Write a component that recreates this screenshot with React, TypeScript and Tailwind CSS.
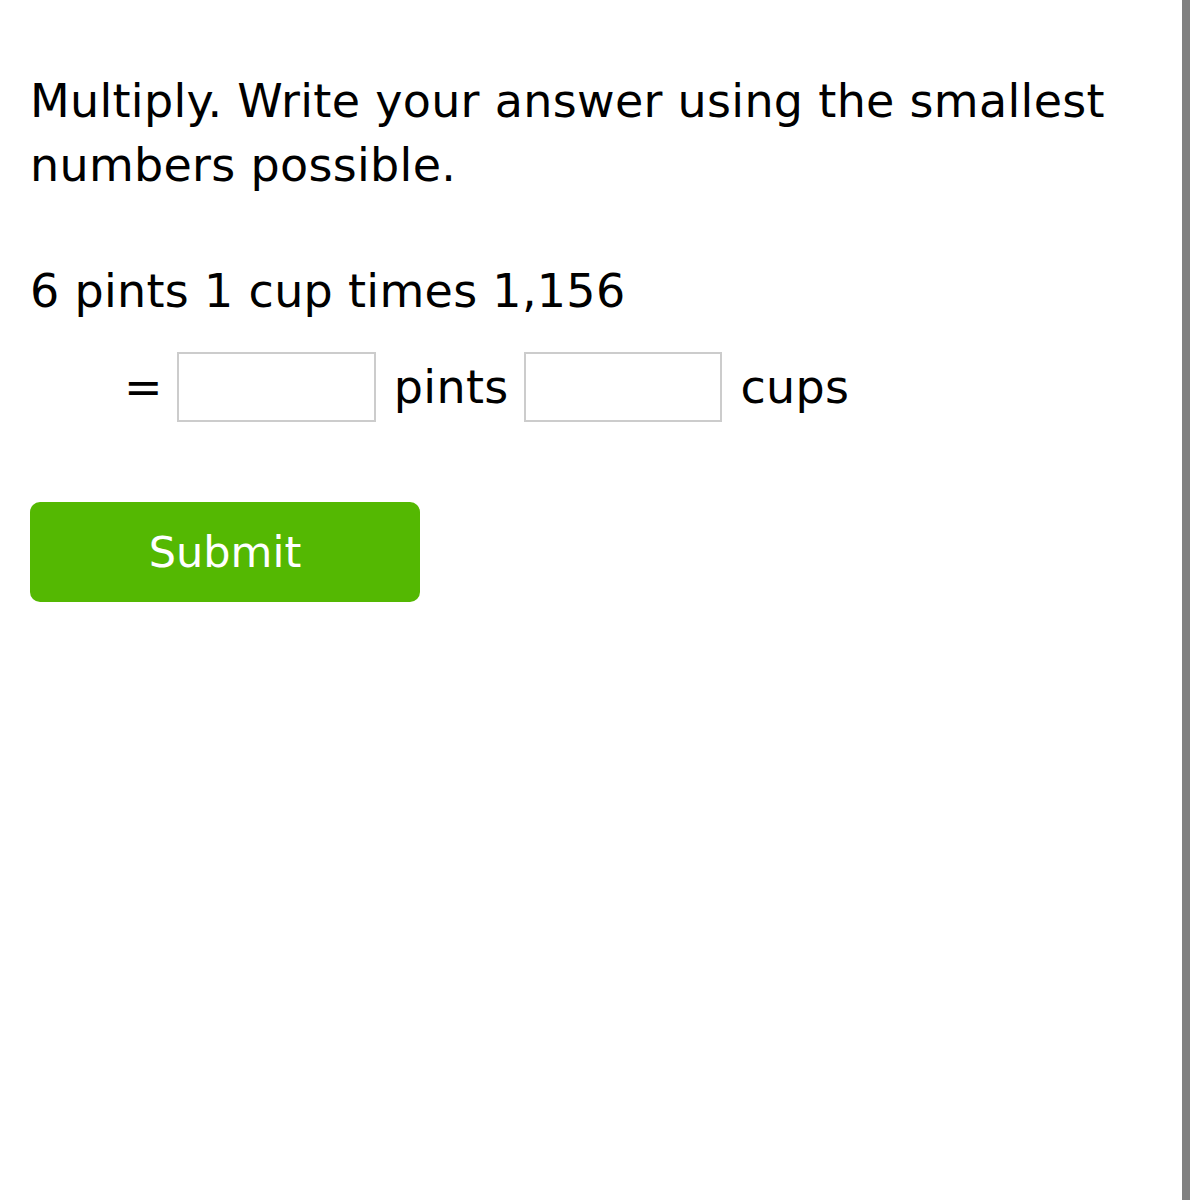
import React from "react";

export default function App() {
  return (
    <div className="flex h-[1200px] w-[1200px] bg-white font-['DejaVu_Sans',sans-serif] text-black">
      <div className="flex-1 pl-[30px] pt-[69px] tracking-[0.3px]">
        <p className="text-[46px] leading-[64px]">
          Multiply. Write your answer using the smallest
          <br />
          numbers possible.
        </p>
        <p className="mt-[62px] text-[46px] leading-[64px]">6 pints 1 cup times 1,156</p>
        <div className="mt-[29px] flex h-[70px] items-center pl-[94px] text-[46px] leading-[70px]">
          <span>=</span>
          <input className="ml-[14px] h-[70px] w-[199px] border-2 border-[#cccccc] bg-white outline-none" />
          <span className="ml-[18px]">pints</span>
          <input className="ml-[16px] h-[70px] w-[198px] border-2 border-[#cccccc] bg-white outline-none" />
          <span className="ml-[18px]">cups</span>
        </div>
        <button className="mt-[80px] flex h-[100px] w-[390px] items-center justify-center rounded-[10px] bg-[#54b802] text-[43px] tracking-normal text-white">
          Submit
        </button>
      </div>
      <div className="w-[8px] bg-[#808080]" />
      <div className="w-[10px]" />
    </div>
  );
}
